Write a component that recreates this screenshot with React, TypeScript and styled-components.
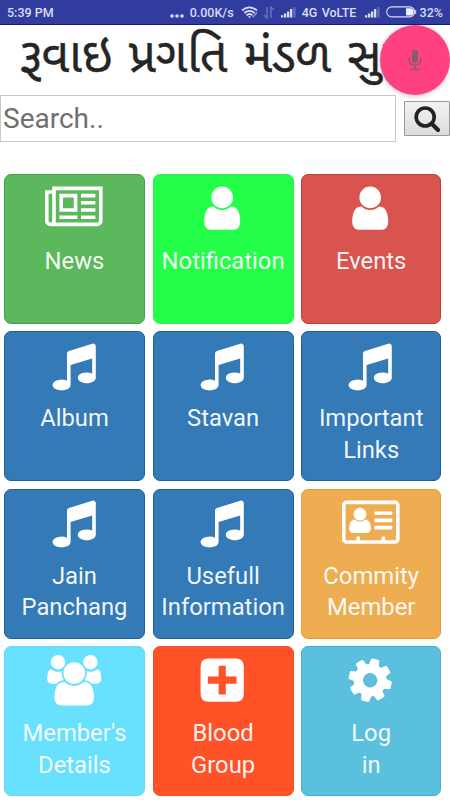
import React from 'react';
import styled, { createGlobalStyle } from 'styled-components';

const GlobalStyle = createGlobalStyle`
  * { box-sizing: border-box; }
  body {
    margin: 0;
    background: #fff;
    font-family: Roboto, sans-serif;
    overflow: hidden;
  }
`;

const Screen = styled.div`
  width: 450px;
  height: 800px;
  display: flex;
  flex-direction: column;
  overflow: hidden;
  position: relative;
`;

const StatusBar = styled.header`
  height: 25px;
  flex: none;
  display: flex;
  align-items: center;
  padding: 0 7px 0 7px;
  background: #303d9f;
  border-bottom: 1px solid #111a70;
  color: #d9dcf5;
  font-size: 12.5px;
  font-weight: 500;
  white-space: nowrap;
`;

const StatusText = styled.span<{ $width?: number; $push?: boolean }>`
  flex: none;
  width: ${(p) => (p.$width ? `${p.$width}px` : 'auto')};
  margin-left: ${(p) => (p.$push ? 'auto' : '0')};
`;

const StatusIcons = styled.svg`
  flex: none;
  display: block;
`;

const Title = styled.h1`
  margin: 0;
  height: 70px;
  flex: none;
  padding-left: 20px;
  overflow: hidden;
  white-space: nowrap;
  color: #252525;
  font-family: 'Noto Sans Gujarati', 'Noto Sans', sans-serif;
  font-weight: 400;
  font-size: 48px;
  word-spacing: 3.8px;
  line-height: 71px;
  -webkit-text-stroke: 0.5px #252525;
`;

const VoiceButton = styled.button`
  position: absolute;
  top: 25px;
  right: 0;
  width: 70px;
  height: 70px;
  padding: 0;
  border: 0;
  border-radius: 50%;
  background: #ff4081;
  box-shadow: 0 1px 5px rgba(0, 0, 0, 0.25);
  display: grid;
  place-items: center;
`;

const SearchRow = styled.form`
  display: flex;
  align-items: center;
  gap: 8px;
  height: 47px;
  flex: none;
`;

const SearchInput = styled.input`
  width: 396px;
  height: 47px;
  padding: 0 0 1px 2px;
  border: 1px solid #c8c8c8;
  border-radius: 0;
  outline: 0;
  background: #fff;
  font-family: Roboto, sans-serif;
  font-size: 28px;
  &::placeholder { color: #707070; opacity: 1; }
`;

const SearchButton = styled.button`
  width: 46px;
  height: 35px;
  padding: 0;
  border: 1px solid #999;
  border-radius: 1px;
  background: linear-gradient(#f3f3f3, #dcdcdc);
  display: grid;
  place-items: center;
`;

const TileGrid = styled.main`
  display: grid;
  grid-template-columns: 141px 141px 140px;
  grid-auto-rows: 149.8px;
  column-gap: 7.6px;
  row-gap: 7.7px;
  padding: 32px 0 0 4px;
`;

const Tile = styled.button<{ $color: string; $edge: string }>`
  display: flex;
  flex-direction: column;
  align-items: center;
  min-width: 0;
  padding: 7.5px 0 0;
  border: 1px solid ${(p) => p.$edge};
  border-radius: 7px;
  background: ${(p) => p.$color};
  color: #fff;
  font-family: Roboto, sans-serif;
`;

const TileIcon = styled.svg`
  height: 50.4px;
  flex: none;
  overflow: visible;
  margin-right: 1px;
  fill: #fff;
`;

const TileLabel = styled.span`
  margin-top: 13px;
  font-size: 23.8px;
  line-height: 31.4px;
  color: rgba(255, 255, 255, 0.95);
  white-space: pre-line;
`;

type IconName = 'news' | 'user' | 'music' | 'card' | 'users' | 'plus' | 'gear';

const shapes: Record<IconName, { width: number; path: string; turn?: number }> = {
  news: {
    width: 2048,
    path: 'M1024 512h-384v384h384v-384zm128 640v128h-640v-128h640zm0-768v640h-640v-640h640zm640 768v128h-512v-128h512zm0-256v128h-512v-128h512zm0-256v128h-512v-128h512zm0-256v128h-512v-128h512zm-1536 960v-960h-128v960q0 26 19 45t45 19 45-19 19-45zm1664 0v-1088h-1536v1088q0 33-11 64h1483q26 0 45-19t19-45zm128-1216v1216q0 80-56 136t-136 56h-1664q-80 0-136-56t-56-136v-1088h256v-128h1792z',
  },
  user: {
    width: 1792,
    path: 'M1536 1399q0 109-62.5 187t-150.5 78h-854q-88 0-150.5-78t-62.5-187q0-85 8.5-160.5t31.5-152 58.5-131 94-89 134.5-34.5q131 128 313 128t313-128q76 0 134.5 34.5t94 89 58.5 131 31.5 152 8.5 160.5zm-256-887q0 159-112.5 271.5t-271.5 112.5-271.5-112.5-112.5-271.5 112.5-271.5 271.5-112.5 271.5 112.5 112.5 271.5z',
  },
  music: {
    width: 1792,
    path: 'M1664 224v1120q0 50-34 89t-86 60.5-103.5 32-96.5 10.5-96.5-10.5-103.5-32-86-60.5-34-89 34-89 86-60.5 103.5-32 96.5-10.5q105 0 192 39v-537l-768 237v709q0 50-34 89t-86 60.5-103.5 32-96.5 10.5-96.5-10.5-103.5-32-86-60.5-34-89 34-89 86-60.5 103.5-32 96.5-10.5q105 0 192 39v-967q0-31 19-56.5t49-35.5l832-256q12-4 28-4 40 0 68 28t28 68z',
  },
  card: {
    width: 2048,
    path: 'M1024 1131q0-64-9-117.5t-29.5-103-60.5-78-97-28.5q-6 4-30 18t-37.5 21.5-35.5 17.5-43 14.5-42 4.5-42-4.5-43-14.5-35.5-17.5-37.5-21.5-30-18q-57 0-97 28.5t-60.5 78-29.5 103-9 117.5 37 106.5 91 42.5h512q54 0 91-42.5t37-106.5zM867 611q0-94-66.5-160.5t-160.5-66.5-160.5 66.5-66.5 160.5 66.5 160.5 160.5 66.5 160.5-66.5 66.5-160.5zM1184 512h576q32 0 32 32v64q0 32-32 32h-576q-32 0-32-32v-64q0-32 32-32zM1184 768h576q32 0 32 32v64q0 32-32 32h-576q-32 0-32-32v-64q0-32 32-32zM1184 1024h576q32 0 32 32v64q0 32-32 32h-576q-32 0-32-32v-64q0-32 32-32zM1920 1504V288q0-13-9.5-22.5T1888 256H160q-13 0-22.5 9.5T128 288v1216q0 13 9.5 22.5t22.5 9.5h352v-96q0-14 9-23t23-9h64q14 0 23 9t9 23v96h768v-96q0-14 9-23t23-9h64q14 0 23 9t9 23v96h352q13 0 22.5-9.5t9.5-22.5zM2048 288v1216q0 66-47 113t-113 47H160q-66 0-113-47T0 1504V288q0-66 47-113t113-47h1728q66 0 113 47t47 113z',
  },
  users: {
    width: 1792,
    path: 'M529 896q-162 5-265 128h-134q-82 0-138-40.5t-56-118.5q0-353 124-353 6 0 43.5 21t97.5 42.5 119 21.5q67 0 133-23-5 37-5 66 0 139 81 256zm1071 637q0 120-73 189.5t-194 69.5h-874q-121 0-194-69.5t-73-189.5q0-53 3.5-103.5t14-109 26.5-108.5 43-97.5 62-81 85.5-53.5 111.5-20q10 0 43 21.5t73 48 107 48 135 21.5 135-21.5 107-48 73-48 43-21.5q61 0 111.5 20t85.5 53.5 62 81 43 97.5 26.5 108.5 14 109 3.5 103.5zm-1024-1277q0 106-75 181t-181 75-181-75-75-181 75-181 181-75 181 75 75 181zm704 384q0 159-112.5 271.5t-271.5 112.5-271.5-112.5-112.5-271.5 112.5-271.5 271.5-112.5 271.5 112.5 112.5 271.5zm576 225q0 78-56 118.5t-138 40.5h-134q-103-123-265-128 81-117 81-256 0-29-5-66 66 23 133 23 59 0 119-21.5t97.5-42.5 43.5-21q124 0 124 353zm-128-609q0 106-75 181t-181 75-181-75-75-181 75-181 181-75 181 75 75 181z',
  },
  plus: {
    width: 1792,
    path: 'M416 128h960q288 0 288 288v960q0 288-288 288H416q-288 0-288-288V416q0-288 288-288zM800 384q-32 0-32 32v352H416q-32 0-32 32v192q0 32 32 32h352v352q0 32 32 32h192q32 0 32-32v-352h352q32 0 32-32V800q0-32-32-32h-352V416q0-32-32-32z',
  },
  gear: {
    width: 1792,
    turn: 14,
    path: 'M1152 896q0-106-75-181t-181-75-181 75-75 181 75 181 181 75 181-75 75-181zm512-109v222q0 12-8 23t-20 13l-185 28q-19 54-39 91 35 50 107 138 10 12 10 25t-9 23q-27 37-99 108t-94 71q-12 0-26-9l-138-108q-44 23-91 38-16 136-29 186-7 28-36 28h-222q-14 0-24.5-8.5t-11.5-21.5l-28-184q-49-16-90-37l-141 107q-10 9-25 9-14 0-25-11-126-114-165-168-7-10-7-23 0-12 8-23 15-21 51-66.5t54-70.5q-27-50-41-99l-183-27q-13-2-21-12.5t-8-23.5v-222q0-12 8-23t19-13l186-28q14-46 39-92-40-57-107-138-10-12-10-24 0-10 9-23 26-36 98.5-107.5t94.5-71.5q13 0 26 10l138 107q44-23 91-38 16-136 29-186 7-28 36-28h222q14 0 24.5 8.5t11.5 21.5l28 184q49 16 90 37l142-107q9-9 24-9 13 0 25 10 129 119 165 170 7 8 7 22 0 12-8 23-15 21-51 66.5t-54 70.5q26 50 41 98l183 28q13 2 21 12.5t8 23.5z',
  },
};

const tiles: { label: string; icon: IconName; color: string; edge: string }[] = [
  { label: 'News', icon: 'news', color: '#5cb85c', edge: '#4a9b4c' },
  { label: 'Notification', icon: 'user', color: '#23ff48', edge: '#3be85b' },
  { label: 'Events', icon: 'user', color: '#d9534f', edge: '#b8403d' },
  { label: 'Album', icon: 'music', color: '#337ab7', edge: '#20609a' },
  { label: 'Stavan', icon: 'music', color: '#337ab7', edge: '#20609a' },
  { label: 'Important\nLinks', icon: 'music', color: '#337ab7', edge: '#20609a' },
  { label: 'Jain\nPanchang', icon: 'music', color: '#337ab7', edge: '#20609a' },
  { label: 'Usefull\nInformation', icon: 'music', color: '#337ab7', edge: '#20609a' },
  { label: 'Commity\nMember', icon: 'card', color: '#eead50', edge: '#e09c3c' },
  { label: "Member's\nDetails", icon: 'users', color: '#68e1ff', edge: '#62d9f6' },
  { label: 'Blood\nGroup', icon: 'plus', color: '#ff5226', edge: '#f04e27' },
  { label: 'Log\nin', icon: 'gear', color: '#5bc0de', edge: '#48aecd' },
];

function SignalIcon() {
  return (
    <StatusIcons width="15" height="12" viewBox="0 0 15 12" fill="#d9dcf5">
      <path d="M0 9.3h2.300V11.500H0zM3 7.500h2.300v4H3zM6 5.500h2.300v6H6zM9 3h2.300v8.500H9z" />
      <path d="M12.3 1h2.200v10.500h-2.200z" opacity=".3" />
    </StatusIcons>
  );
}

const Gap = styled.span<{ $w: number }>`
  flex: none;
  width: ${(p) => p.$w}px;
`;

export default function App() {
  return (
    <>
      <GlobalStyle />
      <Screen>
        <StatusBar>
          <StatusText>5:39 PM</StatusText>
          <Gap $w={116} />
          <StatusIcons width="14" height="16" viewBox="0 0 14 16" fill="#d9dcf5">
            <circle cx="2" cy="12" r="1.8" />
            <circle cx="7" cy="12" r="1.8" />
            <circle cx="12" cy="12" r="1.8" />
          </StatusIcons>
          <Gap $w={6} />
          <StatusText $width={44}>0.00K/s</StatusText>
          <Gap $w={7} />
          <StatusIcons width="17" height="13" viewBox="0 0 17 13" fill="none" stroke="#d9dcf5" strokeWidth="1.7">
            <path d="M1 4.5Q8.500-1.700 16 4.500M3.300 7Q8.500 2.600 13.700 7M5.500 9.300Q8.500 6.700 11.500 9.300" />
            <path d="M6.900 10.300h3.200L8.500 12.200z" fill="#d9dcf5" stroke="none" />
            <path d="M11.500 11.500l4.500-5" strokeWidth="1.300" opacity=".6" />
          </StatusIcons>
          <Gap $w={5} />
          <StatusIcons width="12" height="13" viewBox="0 0 12 13" fill="none" stroke="#8089cc" strokeWidth="1.4">
            <path d="M4 1v11L1 9M8 12V1l3 3" opacity=".75" />
          </StatusIcons>
          <Gap $w={6} />
          <SignalIcon />
          <Gap $w={6} />
          <StatusText $width={20}>4G</StatusText>
          <StatusText $width={36}>VoLTE</StatusText>
          <Gap $w={7} />
          <SignalIcon />
          <StatusText $push />
          <StatusIcons width="31" height="12" viewBox="0 0 31 12">
            <rect x=".7" y=".9" width="28" height="10" rx="5" fill="none" stroke="#d9dcf5" strokeWidth="1.100" />
            <path d="M20 2.200h4a3.700 3.700 0 010 7.400h-4z" fill="#eef0ff" />
            <path d="M29.700 4v4" stroke="#d9dcf5" />
          </StatusIcons>
          <Gap $w={3} />
          <StatusText>32%</StatusText>
        </StatusBar>

        <Title lang="gu">રૂવાઇ પ્રગતિ મંડળ સુરત</Title>
        <VoiceButton type="button" aria-label="Voice">
          <StatusIcons width="14" height="22" viewBox="0 0 14 22" fill="none" stroke="#8c5a70" strokeWidth="1.500">
            <rect x="4" y="1" width="6" height="12.500" rx="1.500" fill="#875c70" stroke="none" />
            <path d="M1.200 8.500v2.500Q1.200 16 7 16t5.800-5V8.500M7 16v4M2 20.500h10" />
          </StatusIcons>
        </VoiceButton>

        <SearchRow>
          <SearchInput placeholder="Search.." />
          <SearchButton type="button" aria-label="Search">
            <StatusIcons width="28" height="28" viewBox="0 0 28 28" fill="none" stroke="#222">
              <circle cx="12.200" cy="12" r="9" strokeWidth="3.600" />
              <path d="M18.800 18.700l6.200 6.200" strokeWidth="4.200" strokeLinecap="round" />
            </StatusIcons>
          </SearchButton>
        </SearchRow>

        <TileGrid>
          {tiles.map((tile) => {
            const shape = shapes[tile.icon];
            return (
              <Tile key={tile.label} type="button" $color={tile.color} $edge={tile.edge}>
                <TileIcon viewBox={`0 0 ${shape.width} 1792`}>
                  <path
                    d={shape.path}
                    fillRule="evenodd"
                    transform={shape.turn ? `rotate(${shape.turn} 896 896)` : undefined}
                  />
                </TileIcon>
                <TileLabel>{tile.label}</TileLabel>
              </Tile>
            );
          })}
        </TileGrid>
      </Screen>
    </>
  );
}
